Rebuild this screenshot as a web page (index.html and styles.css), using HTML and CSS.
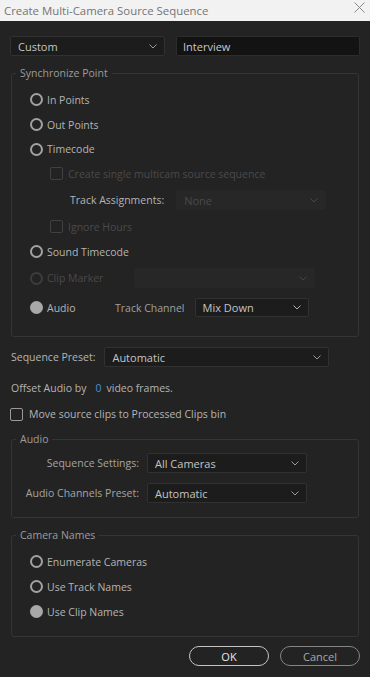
FILE: index.html
```html
<!DOCTYPE html>
<html lang="en">
<head>
    <meta charset="UTF-8">
    <meta name="viewport" content="width=device-width, initial-scale=1.0">
    <title>Create Multi-Camera Source Sequence</title>
    <link rel="stylesheet" href="styles.css">
</head>
<body>

    <div class="dialog">
        <div class="titlebar">
            <span class="title">Create Multi-Camera Source Sequence</span>
            <svg class="close" width="11" height="11" viewBox="0 0 11 11"><path d="M0.5 0.5 L10.5 10.5 M10.5 0.5 L0.5 10.5" stroke="#8a8a8a" stroke-width="1" fill="none"/></svg>
        </div>

        <div class="content">
            <div class="top-row">
                <div class="select select-custom"><span>Custom</span><svg class="chev" width="8" height="5" viewBox="0 0 8 5"><path d="M0.5 0.5 L4 4 L7.5 0.5" stroke="#9a9a9a" fill="none"/></svg></div>
                <div class="text-input">Interview</div>
            </div>

            <!-- Точка синхронизации -->
            <fieldset class="group group-sync">
                <legend>Synchronize Point</legend>
                <div class="rows">
                    <div class="row"><span class="radio"></span><span class="label">In Points</span></div>
                    <div class="row"><span class="radio"></span><span class="label">Out Points</span></div>
                    <div class="row row-short"><span class="radio"></span><span class="label">Timecode</span></div>
                    <div class="row sub"><span class="check disabled"></span><span class="label disabled">Create single multicam source sequence</span></div>
                    <div class="row tall sub2">
                        <span class="label">Track Assignments:</span>
                        <div class="select select-track disabled"><span>None</span><svg class="chev" width="8" height="5" viewBox="0 0 8 5"><path d="M0.5 0.5 L4 4 L7.5 0.5" stroke="#4a4a4a" fill="none"/></svg></div>
                    </div>
                    <div class="row sub"><span class="check disabled"></span><span class="label disabled">Ignore Hours</span></div>
                    <div class="row"><span class="radio"></span><span class="label">Sound Timecode</span></div>
                    <div class="row tall">
                        <span class="radio disabled"></span><span class="label disabled">Clip Marker</span>
                        <div class="select select-marker disabled"><svg class="chev" width="8" height="5" viewBox="0 0 8 5"><path d="M0.5 0.5 L4 4 L7.5 0.5" stroke="#444" fill="none"/></svg></div>
                    </div>
                    <div class="row taller">
                        <span class="radio checked"></span><span class="label label-audio">Audio</span>
                        <span class="label label-channel">Track Channel</span>
                        <div class="select select-channel"><span>Mix Down</span><svg class="chev" width="8" height="5" viewBox="0 0 8 5"><path d="M0.5 0.5 L4 4 L7.5 0.5" stroke="#b0b0b0" fill="none"/></svg></div>
                    </div>
                </div>
            </fieldset>

            <div class="line line-preset">
                <span class="label">Sequence Preset:</span>
                <div class="select select-preset"><span>Automatic</span><svg class="chev" width="8" height="5" viewBox="0 0 8 5"><path d="M0.5 0.5 L4 4 L7.5 0.5" stroke="#9a9a9a" fill="none"/></svg></div>
            </div>
            <div class="line line-offset">
                <span class="label">Offset Audio by</span><span class="num">0</span><span class="label">video frames.</span>
            </div>
            <div class="line line-move">
                <span class="check"></span><span class="label">Move source clips to Processed Clips bin</span>
            </div>

            <!-- Аудио -->
            <fieldset class="group group-audio">
                <legend>Audio</legend>
                <div class="form-row">
                    <span class="label right">Sequence Settings:</span>
                    <div class="select select-audio"><span>All Cameras</span><svg class="chev" width="8" height="5" viewBox="0 0 8 5"><path d="M0.5 0.5 L4 4 L7.5 0.5" stroke="#9a9a9a" fill="none"/></svg></div>
                </div>
                <div class="form-row">
                    <span class="label right">Audio Channels Preset:</span>
                    <div class="select select-audio"><span>Automatic</span><svg class="chev" width="8" height="5" viewBox="0 0 8 5"><path d="M0.5 0.5 L4 4 L7.5 0.5" stroke="#9a9a9a" fill="none"/></svg></div>
                </div>
            </fieldset>

            <!-- Имена камер -->
            <fieldset class="group group-names">
                <legend>Camera Names</legend>
                <div class="rows">
                    <div class="row"><span class="radio"></span><span class="label">Enumerate Cameras</span></div>
                    <div class="row"><span class="radio"></span><span class="label">Use Track Names</span></div>
                    <div class="row"><span class="radio checked"></span><span class="label">Use Clip Names</span></div>
                </div>
            </fieldset>

            <div class="buttons">
                <button class="btn btn-ok">OK</button>
                <button class="btn btn-cancel">Cancel</button>
            </div>
        </div>
    </div>

</body>
</html>
```

FILE: styles.css
```css
* {
    margin: 0;
    padding: 0;
    box-sizing: border-box;
}

body {
    font-family: 'Open Sans', 'Noto Sans', sans-serif;
    font-size: 10.5px;
    background: #232323;
    color: #b4b4b4;
    width: 370px;
    height: 677px;
    overflow: hidden;
}

.titlebar {
    height: 21px;
    background: #f2f2f2;
    display: flex;
    align-items: center;
    justify-content: space-between;
    padding: 0 5px 0 4px;
}

.title {
    font-size: 11.4px;
    color: #747474;
    line-height: 1;
}

.close {
    margin-top: -6px;
}

.content {
    padding: 15px 10px 0 10px;
}

.top-row {
    display: flex;
    gap: 11px;
}

/* Выпадающие списки */
.select {
    height: 20px;
    background: #1c1c1c;
    border: 1px solid #313131;
    border-radius: 2px;
    display: flex;
    align-items: center;
    justify-content: space-between;
    padding: 0 7px 0 7px;
    color: #c4c4c4;
    font-size: 11px;
}

.select.disabled {
    background: #272727;
    border-color: #272727;
    color: #4a4a4a;
}

.select-marker {
    justify-content: flex-end;
}

.select-custom {
    width: 155px;
}

.text-input {
    flex: 1;
    height: 20px;
    background: #131313;
    border: 1px solid #2c2c2c;
    border-radius: 2px;
    padding: 0 6px;
    display: flex;
    align-items: center;
    color: #c8c8c8;
    font-size: 11px;
}

/* Группы */
.group {
    border: 1px solid #353535;
    border-radius: 3px;
    margin: 10px 1px 0 1px;
    padding: 7px 0 13px 0;
}

.group legend {
    margin-left: 4px;
    padding: 0 4px;
    line-height: 14px;
    color: #9c9c9c;
}

.rows {
    padding-left: 18px;
}

.row {
    height: 25px;
    display: flex;
    align-items: center;
}

.row-short {
    height: 24px;
}

.row.tall {
    height: 28px;
}

.row.taller {
    height: 31px;
}

.row.sub {
    padding-left: 20px;
}

.row.sub2 {
    padding-left: 40px;
}

.radio {
    width: 13px;
    height: 13px;
    border: 2px solid #a2a2a2;
    border-radius: 50%;
    margin-right: 4px;
    flex-shrink: 0;
}

.radio.checked {
    background: #a8a8a8;
    border-color: #a8a8a8;
}

.radio.disabled {
    border-color: #3c3c3c;
}

.check {
    width: 13px;
    height: 13px;
    border: 1.5px solid #9a9a9a;
    border-radius: 2px;
    margin-right: 5px;
    flex-shrink: 0;
}

.check.disabled {
    border-color: #404040;
}

.label.disabled {
    color: #4a4a4a;
}

.select-track {
    width: 150px;
    margin-left: 12px;
}

.select-marker {
    width: 181px;
    margin-left: 31px;
}

.label-audio {
    width: 68px;
}

.label-channel {
    color: #a0a0a0;
}

.select-channel {
    width: 114px;
    margin-left: 10px;
    height: 19px;
}

/* Строки под группой */
.line {
    display: flex;
    align-items: center;
    padding-left: 1px;
}

.line-preset {
    margin-top: 10px;
    height: 20px;
}

.select-preset {
    width: 225px;
    margin-left: 9px;
}

.line-offset {
    margin-top: 11px;
    height: 20px;
}

.num {
    color: #4a90d6;
    margin: 0 5px 0 9px;
}

.line-move {
    margin-top: 6px;
    height: 20px;
    padding-left: 0;
}

.line-move .check {
    margin-right: 6px;
}

.group-audio {
    margin-top: 8px;
    padding: 7px 0 14px 0;
}

.form-row {
    display: flex;
    align-items: center;
    height: 20px;
    margin-bottom: 10px;
}

.form-row:last-child {
    margin-bottom: 0;
}

.form-row .right {
    width: 127px;
    text-align: right;
    color: #a4a4a4;
}

.select-audio {
    width: 160px;
    margin-left: 8px;
}

.group-names {
    margin-top: 10px;
    padding: 7px 0 12px 0;
}

/* Кнопки */
.buttons {
    display: flex;
    justify-content: flex-end;
    gap: 11px;
    margin-top: 9px;
}

.btn {
    width: 80px;
    height: 20px;
    border-radius: 10px;
    background: transparent;
    font-family: 'Open Sans', 'Noto Sans', sans-serif;
    font-size: 11px;
}

.btn-ok {
    border: 1px solid #c4c4c4;
    color: #e6e6e6;
}

.btn-cancel {
    border: 1px solid #858585;
    color: #a8a8a8;
}
```
